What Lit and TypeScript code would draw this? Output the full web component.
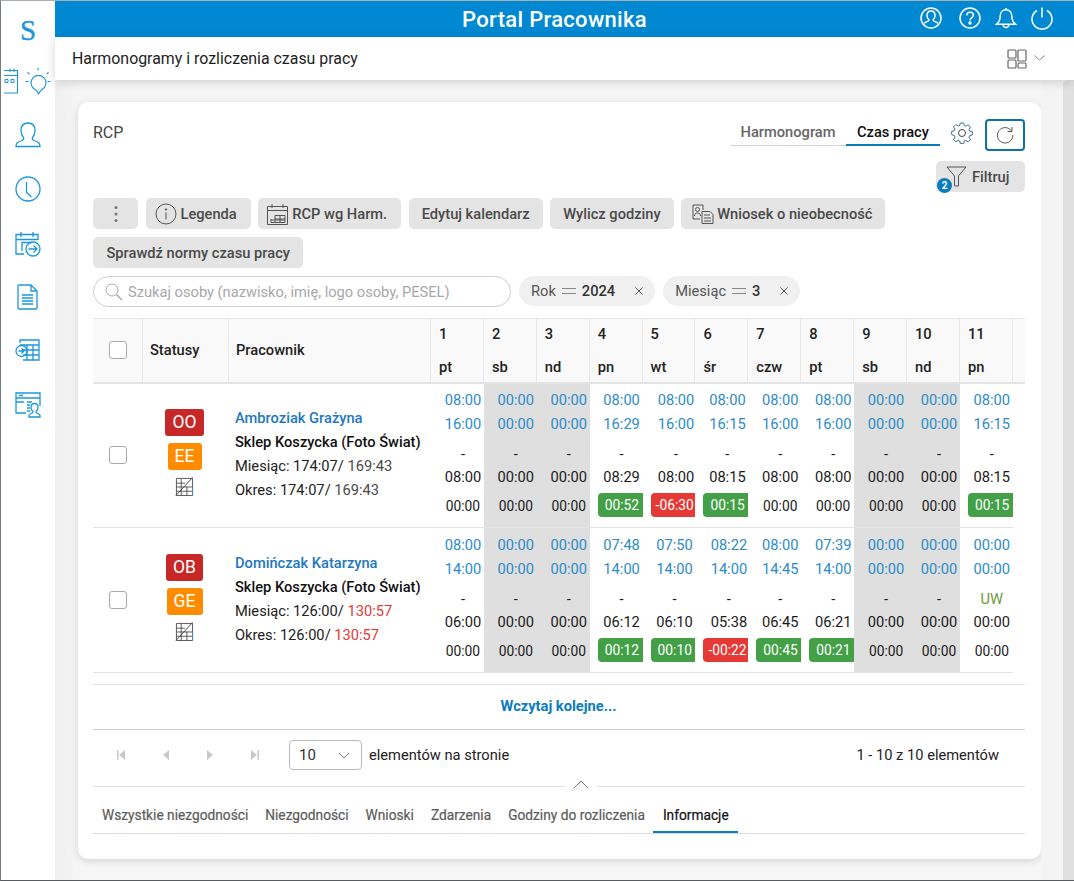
import { LitElement, html, css, svg } from "lit";
import { customElement } from "lit/decorators.js";

type Tone = "g" | "r" | "";
interface Badge { t: string; c: string; w: string }
interface Person {
  name: string; badges: Badge[]; m1: string; m2: string; late: boolean;
  l1: string[]; l2: string[]; l3: string[]; l4: string[]; l5: string[];
}
const WEEK = new Set([1, 2, 8, 9]);
const DAYS = ["pt", "sb", "nd", "pn", "wt", "śr", "czw", "pt", "sb", "nd", "pn"];
const sp = (s: string) => s.split(" ");
const PEOPLE: Person[] = [
  {
    name: "Ambroziak Grażyna",
    badges: [{ t: "OO", c: "red", w: "w39" }, { t: "EE", c: "orange", w: "w34" }],
    m1: "174:07", m2: "169:43", late: false,
    l1: sp("08:00 00:00 00:00 08:00 08:00 08:00 08:00 08:00 00:00 00:00 08:00"),
    l2: sp("16:00 00:00 00:00 16:29 16:00 16:15 16:00 16:00 00:00 00:00 16:15"),
    l3: sp("- - - - - - - - - - -"),
    l4: sp("08:00 00:00 00:00 08:29 08:00 08:15 08:00 08:00 00:00 00:00 08:15"),
    l5: sp("00:00 00:00 00:00 +00:52 -06:30 +00:15 00:00 00:00 00:00 00:00 +00:15"),
  },
  {
    name: "Domińczak Katarzyna",
    badges: [{ t: "OB", c: "red", w: "w37" }, { t: "GE", c: "orange", w: "w36" }],
    m1: "126:00", m2: "130:57", late: true,
    l1: sp("08:00 00:00 00:00 07:48 07:50 08:22 08:00 07:39 00:00 00:00 00:00"),
    l2: sp("14:00 00:00 00:00 14:00 14:00 14:00 14:45 14:00 00:00 00:00 00:00"),
    l3: sp("- - - - - - - - - - UW"),
    l4: sp("06:00 00:00 00:00 06:12 06:10 05:38 06:45 06:21 00:00 00:00 00:00"),
    l5: sp("00:00 00:00 00:00 +00:12 +00:10 -00:22 +00:45 +00:21 00:00 00:00 00:00"),
  },
];

const sideTop = svg`<svg class="sb-first" width="55" height="36" viewBox="0 0 55 36" fill="none" stroke="#1b96dc" stroke-width="1.100">
  <path d="M4 6.500H17.500V29H4M4 11.500H17.500M10 4.500V8M14 4.500V8"/>
  <path d="M5 15.500h3v3H5zM11 15.500h3v3h-3z" stroke-width="1"/>
  <path d="M35 25.500c1.500 1 2.500 2 3 3.500l.5 1c1-1.500 1.500-3 3.500-4.500a7.500 7.500 0 1 0-7 0z"/>
  <path d="M38 6.500V4M29.500 10l-2-1.500M46.500 10l2-1.500M25.500 17.500h3M47.500 17.500h3"/>
</svg>`;

const sideIcons = [
  svg`<path d="M2 25.500c0-3.500 1.500-4.500 6-6 1.500-.5 2-1.500 1.500-3-1.500-1.500-2.500-3.500-2.500-7C7 5 9.500 2 14 2s7 3 7 7.500c0 3.500-1 5.500-2.500 7-.5 1.500 0 2.500 1.500 3 4.500 1.500 6 2.500 6 6z"/>`,
  svg`<circle cx="14" cy="14" r="12"/><path d="M12.500 7v10.500l5 4.500"/>`,
  svg`<path d="M24 11V5.500H2V25h8M2 10.500h22M7 3v5M19 3v5M8 22V13.500h10"/><circle cx="19" cy="20" r="7"/><path d="M14.500 20h8M19.500 16.500l3.500 3.500-3.500 3.500"/>`,
  svg`<path d="M5 2h12l6 6v17a1 1 0 0 1-1 1H5a1 1 0 0 1-1-1V3a1 1 0 0 1 1-1zM17 2v6h6M8 12h11M8 15h11M8 18h11M8 21h11"/>`,
  svg`<path d="M6 6V3h19v20H9M6 8h19M13 8v15M19 8v15M9 13h16M9 18h16" /><circle cx="7.500" cy="14" r="5.500"/><path d="M4.500 14h5M7.500 11.500L10 14l-2.500 2.500"/>`,
  svg`<path d="M12 22H2V2h24v13M2 7h24M5 4.500h4M10 11H2M13 11h5M13 14h3M13 17h3M13 20h3"/><path d="M15 26c-.5-2 .5-3 3-4 1.200-.5 1-1.500.5-2-1-1-1.500-2-1.500-3.500 0-2.500 1.500-4 3.500-4s3.500 1.500 3.500 4c0 1.500-.5 2.500-1.500 3.500-.5.500-.7 1.500.5 2 2.500 1 3.500 2 3 4z"/>`,
];

const gridIcon = svg`<svg class="tbl" width="19" height="21" viewBox="0 0 20 22" fill="none" stroke="#555" stroke-width="1">
  <path d="M1.500 2.500h17v18h-17zM1.500 7.500h9M1.500 11.500h17M1.500 16h17M6.500 2.500v18M12.500 11v9.500"/>
  <path d="M1 20.500L18.500 1.500" stroke="#444"/><path d="M18.500 12v8.500" stroke="#3f8fc6"/>
</svg>`;

@customElement("app-root")
export class AppRoot extends LitElement {
  static styles = css`
    :host { display: block; height: 881px; overflow: hidden; font-family: Roboto, sans-serif; font-size: 14.670px; color: #222; }
    * { box-sizing: border-box; }
    .app { display: flex; height: 881px; border-top: 1px solid #a9b0b4; border-left: 1px solid #757c80; border-bottom: 1px solid #555b60; background: #fff; }
    .side { width: 54px; flex: none; display: flex; flex-direction: column; align-items: center; background: #fff; }
    .logo { height: 63px; padding-top: 11px; font: 400 29px/36px "Liberation Serif", serif; color: #1b96dc; -webkit-text-stroke: .4px #1b96dc; }
    .sb-first { display: block; margin-left: -1px; }
    .sb-ic { display: block; width: 28px; height: 28px; margin-top: 26px; }
    .sb-ic:first-of-type { margin-top: 0; }
    .sb-list { display: flex; flex-direction: column; align-items: center; margin-top: 21px; }
    .main { flex: 1; min-width: 0; display: flex; flex-direction: column; }
    .top { height: 36px; flex: none; background: #0089d2; display: flex; align-items: center; color: #fff; padding-right: 20px; }
    .top h1 { flex: 1; margin: 0; padding-left: 135px; text-align: center; font-size: 22px; font-weight: 500; letter-spacing: .3px; }
    .top-ic { display: flex; gap: 13px; align-items: center; margin-top: -2px; }
    .top-ic svg { display: block; }
    .top-ic .first { margin-right: 2px; }
    .sub { height: 43px; flex: none; display: flex; align-items: center; padding: 0 25px 0 17px; background: #fff; box-shadow: 0 2px 10px rgba(0,0,0,.16); position: relative; z-index: 2; font-size: 15.900px; color: #1e1e1e; }
    .sub span { flex: 1; }
    .sub svg { display: block; }
    .body { flex: 1; display: flex; background: linear-gradient(90deg, #efefef, #f6f6f6 23px); min-height: 0; }
    .card { width: 963px; height: 757px; margin: 22px 0 0 23px; background: #fff; border-radius: 10px; padding: 17px 16px 0 15px; box-shadow: 0 2px 8px rgba(0,0,0,.14); flex: none; }
    .gutter { flex: 1; background: #f4f4f4; }
    .scroll { width: 11px; flex: none; background: #e0e0e0; border-radius: 5px 0 0 0; }

    .head { display: flex; height: 32px; align-items: flex-start; }
    .rcp { flex: 1; line-height: 28px; color: #444; font-size: 16px; }
    .vt { display: flex; height: 28px; margin-top: -1px; margin-right: 11px; }
    .vt div { height: 28px; line-height: 28px; font-weight: 500; border-bottom: 1px solid #d6d6d6; color: #666; text-align: center; }
    .vt .h { width: 116px; }
    .vt .c { width: 94px; color: #111; border-bottom: 2px solid #0b7dbd; }
    .gear { margin: 3px 12px 0 0; display: block; }
    .refresh { width: 40px; height: 32px; border: 2px solid #0e72aa; border-radius: 4px; display: flex; align-items: center; justify-content: center; }
    .filt-row { display: flex; justify-content: flex-end; margin-top: 10px; }
    .filt { position: relative; }
    .btn { height: 31px; border-radius: 5px; background: #e4e4e4; color: #4a4a4a; font-weight: 500; display: flex; align-items: center; gap: 5px; padding: 0 13px; white-space: nowrap; }
    .btn svg { display: block; flex: none; }
    .filt.btn { width: 89px; padding: 0 0 0 10px; gap: 5px; }
    .count { position: absolute; left: 1px; top: 17px; width: 15px; height: 15px; border-radius: 50%; background: #0b7dbd; color: #fff; font-size: 10px; font-weight: 700; line-height: 15px; text-align: center; }
    .bar { display: flex; flex-wrap: wrap; column-gap: 7.500px; row-gap: 8px; margin-top: 6px; }
    .btn.dots { width: 45px; justify-content: center; padding: 0; }
    .btn.ic { padding: 0 14px 0 9px; gap: 4px; }
    .btn.wn { padding: 0 13px 0 10px; gap: 2px; }
    .btn.nr { padding: 0 13.500px; }
    .filters { display: flex; gap: 8px; margin-top: 8px; align-items: flex-start; }
    .search { width: 418px; height: 31px; border: 1px solid #cfcfcf; border-radius: 16px; display: flex; align-items: center; gap: 5px; padding-left: 11px; color: #a8a8a8; }
    .chip { height: 30px; border-radius: 15px; background: #f0f0f0; display: flex; align-items: center; padding: 0 11px 0 12px; color: #555; }
    .chip b { font-weight: 500; color: #333; }
    .chip .eq { margin: 0 6px; display: block; }
    .chip .x { margin-left: 19px; display: block; }

    .grid { display: grid; grid-template-columns: 50px 86px 202px repeat(11, 52.9px); }
    .thead { margin-top: 11px; height: 66px; grid-template-columns: 50px 86px 202px repeat(11, 52.9px) 12px; background: #f9f9f9; border-top: 1px solid #e8e8e8; border-bottom: 2px solid #e4e4e4; position: relative; z-index: 1; font-weight: 500; color: #222; }
    .thead > div { border-right: 1px solid #e8e8e8; display: flex; align-items: center; padding: 0 0 2px 7px; }
    .thead > div:last-child { border-right: 0; }
    .thead > .ck { justify-content: center; padding: 0 0 2px 0; }
    .thead > .d { flex-direction: column; align-items: flex-start; padding: 7px 0 0 8px; line-height: 17px; gap: 16px; }
    .box { width: 18px; height: 18px; border: 1px solid #a9a9a9; border-radius: 3px; background: #fff; display: block; }
    .rows { margin-top: -1px; width: 920px; }
    .row { height: 145px; border-bottom: 1px solid #e4e4e4; }
    .row > div { min-width: 0; }
    .rck { display: flex; align-items: center; justify-content: center; padding-bottom: 1px; }
    .stat { display: flex; flex-direction: column; align-items: center; padding-top: 26px; padding-right: 3px; }
    .bd { height: 27px; border-radius: 3px; color: #fff; font-size: 17.500px; line-height: 27px; text-align: center; margin-bottom: 7px; }
    .bd.red { background: #c62828; } .bd.orange { background: #ff8c00; }
    .w39 { width: 39px; } .w34 { width: 34px; } .w37 { width: 37px; } .w36 { width: 36px; }
    .tbl { display: block; margin-top: -1px; }
    .who { padding: 23px 0 0 6px; line-height: 24px; color: #222; white-space: nowrap; }
    .who .n { color: #1e78c2; font-weight: 500; }
    .who .s { color: #111; font-weight: 500; }
    .who .v { color: #4a4a4a; }
    .who .v.late { color: #e53935; }
    .cell { overflow: hidden; padding-top: 5px; color: #1a1a1a; }
    .cell.off { background: #dfdfdf; }
    .ln { height: 24px; line-height: 24px; text-align: center; padding-left: 11px; }
    .ln.blue { color: #2d8bc9; }
    .ln.b { height: 25px; line-height: 25px; }
    .ln.dash { height: 28px; line-height: 34px; }
    .ln.uw { color: #6f9a3c; }
    .ln.sm { font-size: 13.800px; height: 24px; margin-top: 5px; }
    .neg .ln { padding-left: 14px; }
    .neg .ln.sm { padding-left: 11px; }
    .pill { display: block; margin-left: 8px; padding-left: 3px; width: 52px; border-radius: 4px; height: 24px; line-height: 24px; text-align: left; font-size: 13.800px; color: #fff; text-indent: 4px; margin-top: 4px; }
    .pill.g { background: #43a047; }
    .pill.r { background: #e53935; text-indent: 0; padding-left: 5px; }

    .more { margin-top: 11px; border-top: 1px solid #e0e0e0; border-bottom: 1px solid #cfcfcf; height: 46px; text-align: center; line-height: 42px; color: #0b7dbd; font-weight: 700; padding-right: 1px; }
    .pager { height: 56px; display: flex; align-items: center; padding-bottom: 6px; color: #222; }
    .pg { display: flex; width: 196px; padding-left: 23px; gap: 34.500px; }
    .pg svg { display: block; }
    .sel { width: 73px; height: 30px; border: 1px solid #b9b9b9; border-radius: 4px; display: flex; align-items: center; justify-content: space-between; padding: 0 11px 0 9px; margin-right: 7px; font-size: 15px; color: #333; }
    .pager .grow { flex: 1; }
    .pager .tot { padding-right: 26px; }
    .rule { height: 1px; background: #e2e2e2; position: relative; display: flex; justify-content: center; }
    .rule i { position: absolute; left: 472px; top: -9px; width: 32px; height: 18px; background: #fff; display: flex; justify-content: center; padding-top: 3px; }
    .rule svg { display: block; }
    .tabs { display: flex; height: 47px; border-bottom: 1px solid #dcdcdc; padding-top: 14px; color: #5c5c5c; font-weight: 400; font-size: 13.720px; white-space: nowrap; -webkit-text-stroke: .2px #5c5c5c; }
    .tabs div { padding: 0 8.500px; line-height: 29px; height: 32px; }
    .tabs div:first-child { padding-left: 9px; }
    .tabs .on { color: #111; -webkit-text-stroke: .2px #111; border-bottom: 2px solid #0b7dbd; padding: 0 9.500px; margin-left: 0; }
  `;

  private btnIcon(kind: string) {
    if (kind === "info") return svg`<svg width="22" height="22" viewBox="0 0 22 22" fill="none" stroke="#555" stroke-width="1"><circle cx="11" cy="11" r="10"/><path d="M11 9.500v7"/><circle cx="11" cy="6.500" r=".7" fill="#555"/></svg>`;
    if (kind === "cal") return svg`<svg width="21" height="22" viewBox="0 0 21 22" fill="none" stroke="#555" stroke-width="1"><path d="M.500 3.500h20v18H.500zM.500 7.500h20M5 1v4M16 1v4"/><path d="M4 17h14M8 12.500h10v7H4V16M8 12.500V19.500M13 12.500v7M8 16h10" /></svg>`;
    return svg`<svg width="24" height="22" viewBox="0 0 24 22" fill="none" stroke="#555" stroke-width="1"><path d="M9 16H2V2h10v5"/><circle cx="6.500" cy="6.500" r="2"/><path d="M3.500 13c0-2 1-3 3-3s3 1 3 3"/><path d="M11 8.500h8l3 3v9H11zM13 12h6M13 15h7M13 18h7"/></svg>`;
  }

  private personRow(p: Person) {
    return html`<div class="grid row">
      <div class="rck"><span class="box"></span></div>
      <div class="stat">
        ${p.badges.map((b) => html`<div class="bd ${b.c} ${b.w}">${b.t}</div>`)}
        ${gridIcon}
      </div>
      <div class="who">
        <div class="n">${p.name}</div>
        <div class="s">Sklep Koszycka (Foto Świat)</div>
        <div>Miesiąc: ${p.m1}/ <span class="v ${p.late ? "late" : ""}">${p.m2}</span></div>
        <div>Okres: ${p.m1}/ <span class="v ${p.late ? "late" : ""}">${p.m2}</span></div>
      </div>
      ${DAYS.map((_, i) => {
        const last = p.l5[i];
        const tone: Tone = last[0] === "+" ? "g" : last[0] === "-" ? "r" : "";
        return html`<div class="cell ${WEEK.has(i) ? "off" : ""} ${tone === "r" ? "neg" : ""}">
          <div class="ln blue">${p.l1[i]}</div>
          <div class="ln blue b">${p.l2[i]}</div>
          <div class="ln dash ${p.l3[i] === "UW" ? "uw" : ""}">${p.l3[i]}</div>
          <div class="ln">${p.l4[i]}</div>
          ${tone
            ? html`<span class="pill ${tone}">${tone === "g" ? last.slice(1) : last}</span>`
            : html`<div class="ln sm">${last}</div>`}
        </div>`;
      })}
    </div>`;
  }

  render() {
    return html`<div class="app">
      <nav class="side">
        <div class="logo">S</div>
        ${sideTop}
        <div class="sb-list">
          ${sideIcons.map((p) => svg`<svg class="sb-ic" viewBox="0 0 28 28" fill="none" stroke="#1b96dc" stroke-width="1.300">${p}</svg>`)}
        </div>
      </nav>
      <div class="main">
        <header class="top">
          <h1>Portal Pracownika</h1>
          <div class="top-ic">
            <svg class="first" width="24" height="24" viewBox="0 0 24 24" fill="none" stroke="#fff" stroke-width="1.500"><circle cx="12" cy="12" r="10"/><path d="M12 5c-2.500 0-4 2-4 4.500 0 2 1 3.500 2 4.500 0 1-1.500 1.500-5 3M12 5c2.500 0 4 2 4 4.500 0 2-1 3.500-2 4.500 0 1 1.500 1.500 5 3"/></svg>
            <svg width="24" height="24" viewBox="0 0 24 24" fill="none" stroke="#fff" stroke-width="1.500"><circle cx="12" cy="12" r="10"/><path d="M8.800 9.500c0-2 1.500-3.200 3.300-3.200s3.200 1.200 3.200 2.900c0 2.600-3.200 2.500-3.200 5.300"/><circle cx="12" cy="17" r=".9" fill="#fff"/></svg>
            <svg width="22" height="24" viewBox="0 0 22 24" fill="none" stroke="#fff" stroke-width="1.500"><path d="M11 2v1.800M11 3.800c-3.800 0-5.800 2.800-5.800 6.200 0 5-2 7-4 8.300h19.600c-2-1.300-4-3.300-4-8.300 0-3.400-2-6.200-5.800-6.200zM8 18.500c.3 2 1.500 3 3 3s2.700-1 3-3"/></svg>
            <svg width="24" height="24" viewBox="0 0 24 24" fill="none" stroke="#fff" stroke-width="1.500"><path d="M7 4.500a10 10 0 1 0 10 0M12 1.500v10"/></svg>
          </div>
        </header>
        <div class="sub">
          <span>Harmonogramy i rozliczenia czasu pracy</span>
          <svg width="42" height="20" viewBox="0 0 42 20" fill="none" stroke="#666" stroke-width="1.200"><rect x="1" y="1" width="8" height="8" rx="1"/><rect x="1" y="11" width="8" height="8" rx="1"/><rect x="11" y="1" width="8" height="11" rx="1"/><rect x="11" y="14" width="8" height="5" rx="1"/><path d="M27.500 6.500l5 4.500 5-4.500" stroke-width=".8"/></svg>
        </div>
        <div class="body">
          <section class="card">
            <div class="head">
              <div class="rcp">RCP</div>
              <div class="vt"><div class="h">Harmonogram</div><div class="c">Czas pracy</div></div>
              <svg class="gear" width="22" height="22" viewBox="0 0 22 22" fill="none" stroke="#444" stroke-width="1"><path d="M9.300 1h3.400l.5 2.600 1.700.7 2.200-1.500 2.400 2.400-1.500 2.200.7 1.700 2.600.5v3.400l-2.600.5-.7 1.700 1.500 2.200-2.400 2.400-2.200-1.500-1.700.7-.5 2.600H9.300l-.5-2.600-1.700-.7-2.200 1.500-2.400-2.400 1.500-2.200-.7-1.700L.7 12.700V9.300l2.600-.5.7-1.700-1.500-2.200 2.400-2.400 2.200 1.500 1.700-.7z" stroke="#3f6f90"/><circle cx="11" cy="11" r="3.500"/></svg>
              <div class="refresh"><svg width="18" height="18" viewBox="0 0 18 18" fill="none" stroke="#555" stroke-width="1"><path d="M15.500 5A7.700 7.700 0 1 0 16.800 9M16 1v4.500h-4.500"/></svg></div>
            </div>
            <div class="filt-row">
              <div class="btn filt">
                <svg width="21" height="21" viewBox="0 0 21 21" fill="none" stroke="#555" stroke-width="1"><path d="M1 1h19l-7.500 9v10h-4V10z"/></svg>
                <span class="lab">Filtruj</span><span class="count">2</span>
              </div>
            </div>
            <div class="bar">
              <div class="btn dots"><svg width="4" height="18" viewBox="0 0 4 18" fill="#777"><circle cx="2" cy="2.500" r="1.500"/><circle cx="2" cy="9" r="1.500"/><circle cx="2" cy="15.500" r="1.500"/></svg></div>
              <div class="btn ic">${this.btnIcon("info")}Legenda</div>
              <div class="btn ic">${this.btnIcon("cal")}RCP wg Harm.</div>
              <div class="btn">Edytuj kalendarz</div>
              <div class="btn">Wylicz godziny</div>
              <div class="btn wn">${this.btnIcon("wn")}Wniosek o nieobecność</div>
              <div class="btn nr">Sprawdź normy czasu pracy</div>
            </div>
            <div class="filters">
              <div class="search">
                <svg width="18" height="18" viewBox="0 0 18 18" fill="none" stroke="#aaa" stroke-width="1"><circle cx="7" cy="7" r="6"/><path d="M11.500 11.500l5.500 5.500" stroke-width="1.500"/></svg>
                Szukaj osoby (nazwisko, imię, logo osoby, PESEL)
              </div>
              <div class="chip">Rok<svg class="eq" width="14" height="8" viewBox="0 0 14 8" stroke="#888"><path d="M0 1.500h14M0 6.500h14"/></svg><b>2024</b><svg class="x" width="10" height="10" viewBox="0 0 10 10" stroke="#555"><path d="M1.500 1.500l7 7M8.500 1.500l-7 7"/></svg></div>
              <div class="chip">Miesiąc<svg class="eq" width="14" height="8" viewBox="0 0 14 8" stroke="#888"><path d="M0 1.500h14M0 6.500h14"/></svg><b>3</b><svg class="x" width="10" height="10" viewBox="0 0 10 10" stroke="#555"><path d="M1.500 1.500l7 7M8.500 1.500l-7 7"/></svg></div>
            </div>
            <div class="grid thead">
              <div class="ck"><span class="box"></span></div>
              <div>Statusy</div>
              <div>Pracownik</div>
              ${DAYS.map((d, i) => html`<div class="d"><span>${i + 1}</span><span>${d}</span></div>`)}
              <div></div>
            </div>
            <div class="rows">${PEOPLE.map((p) => this.personRow(p))}</div>
            <div class="more">Wczytaj kolejne...</div>
            <div class="pager">
              <div class="pg">
                <svg width="10" height="10" viewBox="0 0 10 10" fill="#c9c9c9"><path d="M1 0h1.500v10H1zM9 0v10L3 5z"/></svg>
                <svg width="10" height="10" viewBox="0 0 10 10" fill="#c9c9c9"><path d="M8 0v10L2 5z"/></svg>
                <svg width="10" height="10" viewBox="0 0 10 10" fill="#c9c9c9"><path d="M2 0v10l6-5z"/></svg>
                <svg width="10" height="10" viewBox="0 0 10 10" fill="#c9c9c9"><path d="M9 0H7.500v10H9zM1 0v10l6-5z"/></svg>
              </div>
              <div class="sel">10<svg width="12" height="7" viewBox="0 0 12 7" fill="none" stroke="#777"><path d="M1 1l5 5 5-5"/></svg></div>
              <div class="grow">elementów na stronie</div>
              <div class="tot">1 - 10 z 10 elementów</div>
            </div>
            <div class="rule"><i><svg width="16" height="9" viewBox="0 0 16 9" fill="none" stroke="#777"><path d="M1 8l7-7 7 7"/></svg></i></div>
            <div class="tabs">
              <div>Wszystkie niezgodności</div><div>Niezgodności</div><div>Wnioski</div><div>Zdarzenia</div><div>Godziny do rozliczenia</div><div class="on">Informacje</div>
            </div>
          </section>
          <div class="gutter"></div>
          <div class="scroll"></div>
        </div>
      </div>
    </div>`;
  }
}
